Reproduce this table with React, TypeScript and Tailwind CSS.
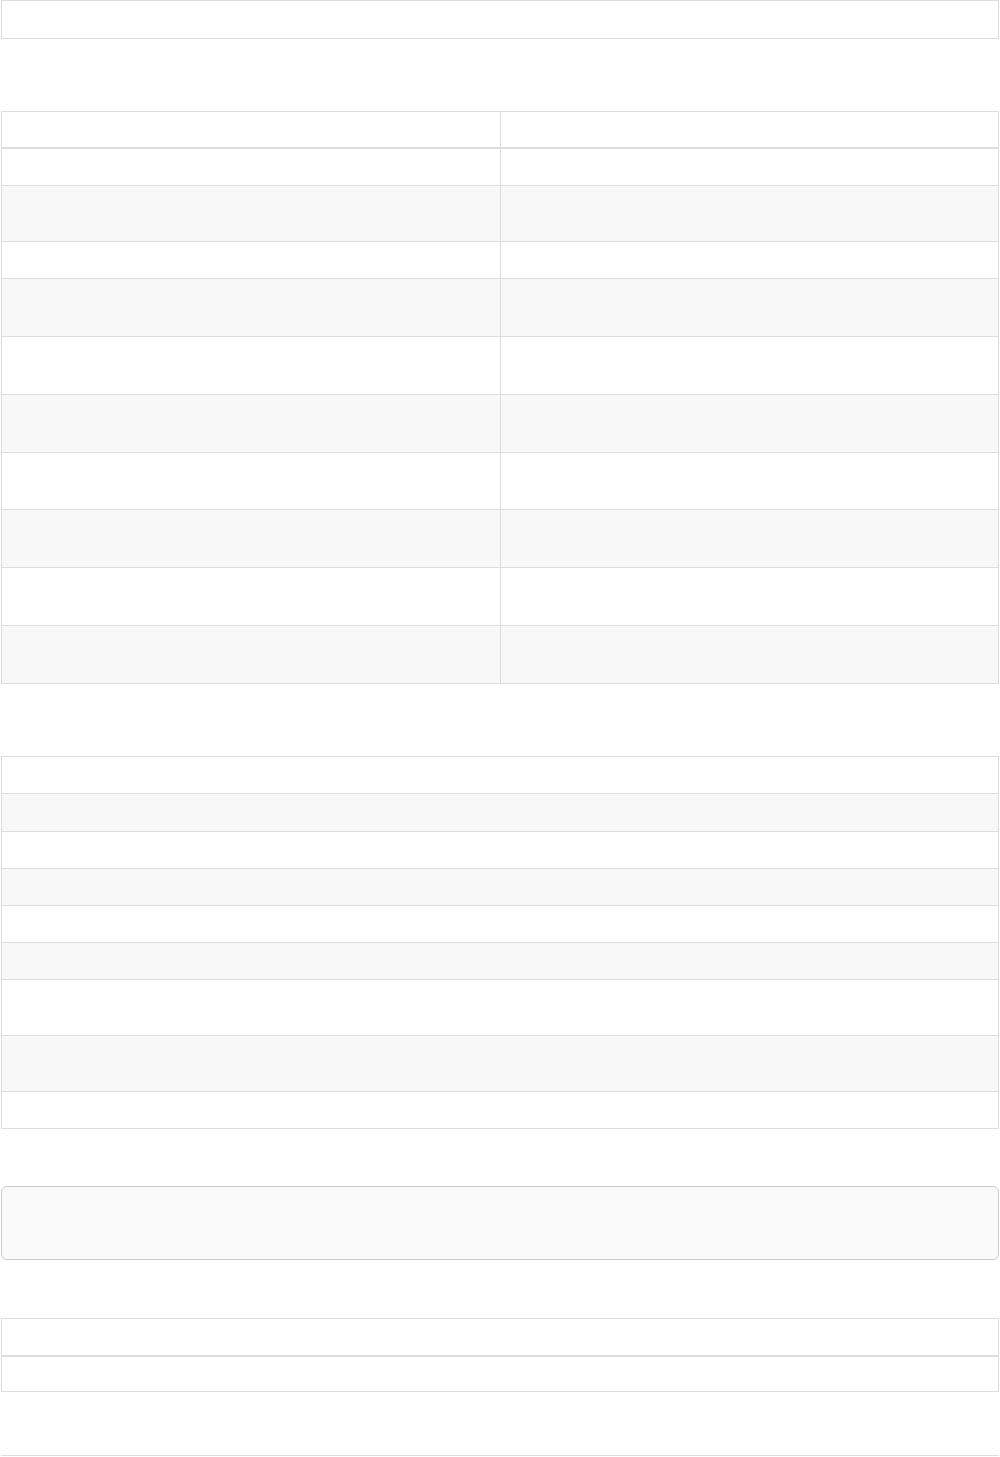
const table1 = [
  { h: 'h-[37px]', stripe: false },
  { h: 'h-[56px]', stripe: true },
  { h: 'h-[37px]', stripe: false },
  { h: 'h-[58px]', stripe: true },
  { h: 'h-[58px]', stripe: false },
  { h: 'h-[58px]', stripe: true },
  { h: 'h-[57px]', stripe: false },
  { h: 'h-[58px]', stripe: true },
  { h: 'h-[58px]', stripe: false },
  { h: 'h-[57px]', stripe: true },
];

const table2 = [
  { h: 'h-[37px]', stripe: false },
  { h: 'h-[38px]', stripe: true },
  { h: 'h-[37px]', stripe: false },
  { h: 'h-[37px]', stripe: true },
  { h: 'h-[37px]', stripe: false },
  { h: 'h-[37px]', stripe: true },
  { h: 'h-[56px]', stripe: false },
  { h: 'h-[56px]', stripe: true },
  { h: 'h-[36px]', stripe: false },
];

export default function App() {
  return (
    <div className="bg-white px-px font-['Liberation_Sans',sans-serif] text-sm text-white">
      {/* leftover block at the top */}
      <div className="h-[39px] border border-[#ddd] bg-white" />

      {/* two column table with header */}
      <div className="mt-[72px] border border-[#ddd]">
        <div className="grid h-[37px] grid-cols-[499px_1fr] border-b-2 border-[#ddd]">
          <div className="border-r border-[#ddd]" />
          <div />
        </div>
        {table1.map((row, i) => (
          <div
            key={i}
            className={`grid grid-cols-[499px_1fr] ${row.h} ${
              i < table1.length - 1 ? 'border-b border-[#ddd]' : ''
            } ${row.stripe ? 'bg-[#f8f8f8]' : 'bg-white'}`}
          >
            <div className="border-r border-[#ddd]" />
            <div />
          </div>
        ))}
      </div>

      {/* single column list table */}
      <div className="mt-[72px] border border-[#ddd]">
        {table2.map((row, i) => (
          <div
            key={i}
            className={`${row.h} ${
              i < table2.length - 1 ? 'border-b border-[#ddd]' : ''
            } ${row.stripe ? 'bg-[#f8f8f8]' : 'bg-white'}`}
          />
        ))}
      </div>

      {/* code block */}
      <pre className="mt-[57px] h-[74px] rounded-md border border-[#ccc] bg-[#fafafa]" />

      {/* small table */}
      <div className="mt-[58px] border border-[#ddd]">
        <div className="h-[38px] border-b-2 border-[#ddd]" />
        <div className="h-[34px] bg-white" />
      </div>

      <hr className="mt-[63px] border-t border-[#ddd]" />
    </div>
  );
}
